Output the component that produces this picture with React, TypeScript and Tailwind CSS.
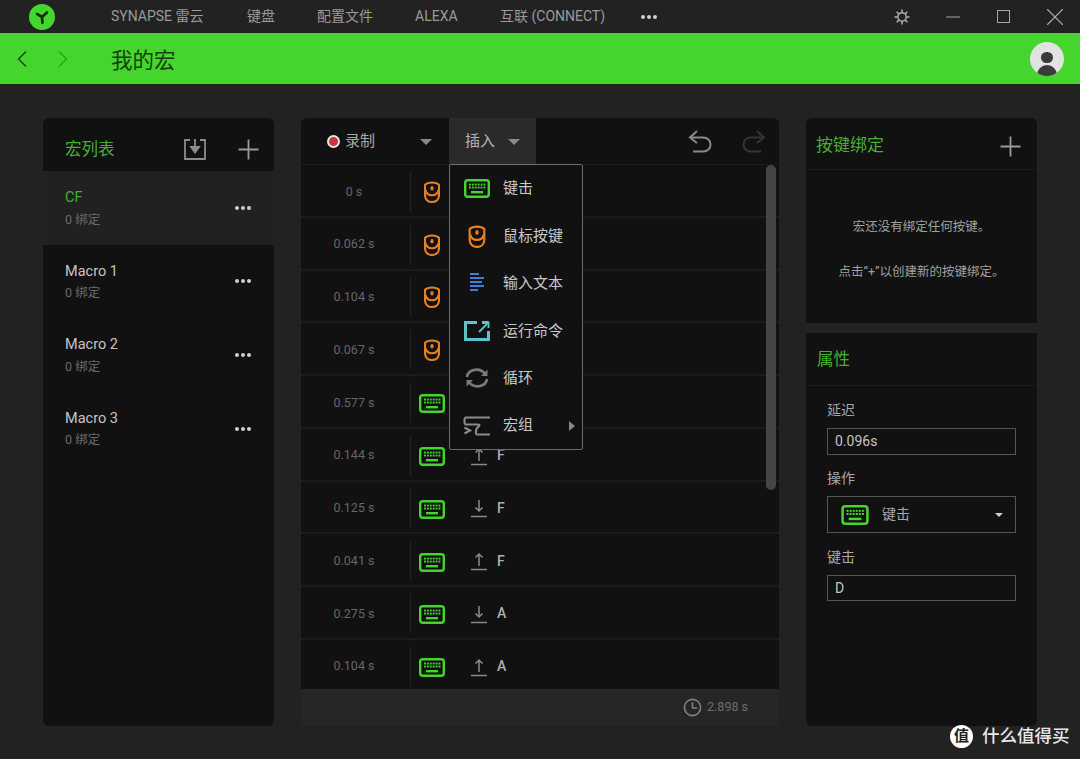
import { ChevronLeft, ChevronRight, X, Minus } from "lucide-react";

const FONT = "font-['Roboto','Noto_Sans_CJK_SC',sans-serif]";

const NAV = ["SYNAPSE 雷云", "键盘", "配置文件", "ALEXA", "互联 (CONNECT)"];
const NAV_X = ["w-[136px]", "w-[70px]", "w-[98px]", "w-[85px]", "w-[141px]"];

const MACROS = ["CF", "Macro 1", "Macro 2", "Macro 3"];

const ROWS = [
  { time: "0 s", kind: "mouse" },
  { time: "0.062 s", kind: "mouse" },
  { time: "0.104 s", kind: "mouse" },
  { time: "0.067 s", kind: "mouse" },
  { time: "0.577 s", kind: "key", dir: "down", key: "F" },
  { time: "0.144 s", kind: "key", dir: "up", key: "F" },
  { time: "0.125 s", kind: "key", dir: "down", key: "F" },
  { time: "0.041 s", kind: "key", dir: "up", key: "F" },
  { time: "0.275 s", kind: "key", dir: "down", key: "A" },
  { time: "0.104 s", kind: "key", dir: "up", key: "A" },
];

function KeyboardIcon({ className = "w-[26px] h-[19px]" }: { className?: string }) {
  return (
    <svg viewBox="0 0 26 19" className={className} fill="none">
      <rect x="1.2" y="1.2" width="23.6" height="16.6" rx="2.5" stroke="#44d62c" strokeWidth="2.4" />
      {[5, 7.9, 10.8, 13.7, 16.6, 19.5].map((x) => (
        <rect key={x} x={x} y="4.6" width="1.9" height="1.9" fill="#44d62c" />
      ))}
      {[5, 7.9, 10.8, 13.7, 16.6, 19.5].map((x) => (
        <rect key={x} x={x} y="7.6" width="1.9" height="1.9" fill="#44d62c" />
      ))}
      <rect x="7" y="12" width="12" height="2.4" fill="#44d62c" />
    </svg>
  );
}

function MouseIcon({ className = "w-[16px] h-[22px]" }: { className?: string }) {
  return (
    <svg viewBox="0 0 16 22" className={className} fill="none" stroke="#e8801f" strokeWidth="2.1">
      <path d="M1 3.8 C4 0.8 12 0.8 15 3.8 V14 C15 18.5 12 21 8 21 C4 21 1 18.5 1 14 Z" />
      <ellipse cx="8" cy="7.2" rx="1.6" ry="2.3" fill="#e8801f" stroke="none" />
      <path d="M1.5 9 C3 16 13 16 14.5 9" />
    </svg>
  );
}

function ArrowLine({ dir }: { dir: string }) {
  return (
    <svg viewBox="0 0 18 20" className="w-[18px] h-[20px]" fill="none" stroke="#8a8a8a" strokeWidth="1.5">
      {dir === "down" ? (
        <path d="M9 2 V13 M5.5 9.5 L9 13 L12.5 9.5" />
      ) : (
        <path d="M9 15 V3 M5.5 6.5 L9 3 L12.5 6.5" />
      )}
      <path d="M1 18.5 H17" />
    </svg>
  );
}

function PlusIcon() {
  return (
    <svg viewBox="0 0 21 21" className="size-[21px]" stroke="#9a9a9a" strokeWidth="1.8">
      <path d="M10.5 0.5 V20.5 M0.5 10.5 H20.5" />
    </svg>
  );
}

function UndoIcon({ flip, color }: { flip?: boolean; color: string }) {
  return (
    <svg viewBox="0 0 24 24" className={`size-[24px] ${flip ? "-scale-x-100" : ""}`} fill="none" stroke={color} strokeWidth="2">
      <path d="M9 2 L2 8.5 L9 14" />
      <path d="M2 8.5 H15 C19.5 8.5 22.5 11.5 22.5 15.5 C22.5 19.5 19.5 22.5 15 22.5 H5" />
    </svg>
  );
}

function Dots({ className = "" }: { className?: string }) {
  return (
    <div className={`flex gap-[2px] ${className}`}>
      <span className="size-[4px] rounded-full bg-[#d0d0d0]" />
      <span className="size-[4px] rounded-full bg-[#d0d0d0]" />
      <span className="size-[4px] rounded-full bg-[#d0d0d0]" />
    </div>
  );
}

function Caret({ className = "" }: { className?: string }) {
  return <span className={`block w-0 h-0 border-x-[6px] border-x-transparent border-t-[6px] border-t-[#8a8a8a] ${className}`} />;
}

function MenuItem({ icon, label, arrow }: { icon: React.ReactNode; label: string; arrow?: boolean }) {
  return (
    <div className="flex items-center h-[47.4px]">
      <div className="w-[53px] flex justify-center">{icon}</div>
      <span className="text-[15px] text-[#c8c8c8]">{label}</span>
      {arrow && <span className="ml-auto mr-[7px] w-0 h-0 border-y-[5px] border-y-transparent border-l-[6px] border-l-[#888]" />}
    </div>
  );
}

export default function App() {
  return (
    <div className={`${FONT} relative w-[1080px] h-[759px] overflow-hidden bg-[#222222] flex flex-col`}>
      {/* title bar */}
      <header className="h-[33px] flex items-center bg-[#222222]">
        <div className="w-[29px]" />
        <div className="size-[26px] rounded-full bg-[#44d62c] flex items-center justify-center">
          <svg viewBox="0 0 20 20" className="size-[18px]" fill="none" stroke="#12300c" strokeWidth="3" strokeLinecap="round">
            <path d="M10 10 L4.5 6.5 M10 10 L15.5 5 M10 10 L10.5 16.5" />
          </svg>
        </div>
        <div className="w-[56px]" />
        <nav className="flex items-center text-[14px] text-[#9a9a9a]">
          {NAV.map((item, i) => (
            <span key={item} className={NAV_X[i]}>{item}</span>
          ))}
        </nav>
        <Dots />
        <div className="ml-auto flex items-center text-[#a8a8a8]">
          <div className="w-[51px] flex justify-center">
            <svg viewBox="0 0 16 16" className="size-[16px]" fill="none" stroke="#b0b0b0" strokeWidth="1.5">
              <circle cx="8" cy="8" r="4.2" />
              <path d="M8 0.5 V3 M8 13 V15.5 M0.5 8 H3 M13 8 H15.5 M2.7 2.7 L4.6 4.6 M11.4 11.4 L13.3 13.3 M2.7 13.3 L4.6 11.4 M11.4 4.6 L13.3 2.7" />
            </svg>
          </div>
          <div className="w-[51px] flex justify-center"><Minus size={22} strokeWidth={1.2} /></div>
          <div className="w-[51px] flex justify-center"><span className="block size-[13px] border border-[#a8a8a8]" /></div>
          <div className="w-[51px] flex justify-center"><X size={30} strokeWidth={0.9} /></div>
        </div>
      </header>

      {/* green bar */}
      <div className="h-[51px] bg-[#44d62c] flex items-center text-[#1a4a12]">
        <ChevronLeft size={28} strokeWidth={1.3} className="ml-[8px]" />
        <ChevronRight size={28} strokeWidth={1.3} className="ml-[13px] text-[#2fa51e]" />
        <span className="ml-[34px] mt-[4px] text-[21.5px] leading-none text-[#17400f]">我的宏</span>
        <div className="ml-auto mr-[16px] size-[34px] rounded-full bg-[#e2e2e2] overflow-hidden flex flex-col items-center">
          <span className="mt-[10px] size-[12px] rounded-full bg-[#3a3a3a]" />
          <span className="mt-[2px] w-[20px] h-[12px] rounded-t-full bg-[#3a3a3a]" />
        </div>
      </div>

      <main className="flex-1 flex pt-[34px] pb-[33px] pl-[43px]">
        {/* macro list */}
        <section className="w-[231px] rounded-[6px] bg-[#111111] overflow-hidden">
          <div className="h-[53px] flex items-center pl-[22px] pt-[9px]">
            <span className="mt-[3px] w-[49px] text-[16.5px] whitespace-nowrap text-[#44b030]">宏列表</span>
            <svg viewBox="0 0 22 22" className="ml-[70px] size-[22px]" fill="none" stroke="#8c8c8c" strokeWidth="1.8">
              <path d="M6 2 H1 V21 H21 V2 H16" />
              <path d="M11 1 V11" />
              <path d="M7 9 L11 14.5 L15 9 Z" fill="#8c8c8c" />
            </svg>
            <div className="ml-[32px]"><PlusIcon /></div>
          </div>
          {MACROS.map((m, i) => (
            <div key={m} className={`h-[73.6px] flex items-center pl-[22px] pr-[23px] ${i === 0 ? "bg-[#212121]" : ""}`}>
              <div className="flex flex-col">
                <span className={`text-[14.5px] leading-[22px] ${i === 0 ? "text-[#44b030]" : "text-[#c4c4c4]"}`}>{m}</span>
                <span className="mt-[1.5px] text-[12.5px] leading-[18px] text-[#6a6a6a]">0 绑定</span>
              </div>
              <Dots className="ml-auto" />
            </div>
          ))}
        </section>

        {/* macro editor */}
        <section className="relative ml-[27px] w-[478px] flex flex-col rounded-t-[6px] overflow-visible">
          <div className="h-[47px] shrink-0 bg-[#111111] rounded-t-[6px] flex items-center border-b border-[#1c1c1c]">
            <span className="ml-[26px] size-[13px] rounded-full bg-[#d0323c] border-[2px] border-[#e8e8e8]" />
            <span className="ml-[5px] w-[30px] text-[15px] whitespace-nowrap text-[#a8a8a8]">录制</span>
            <Caret className="ml-[45px] mt-[2px]" />
            <div className="ml-[17px] w-[87px] h-[47px] bg-[#2a2a2a] flex items-center">
              <span className="ml-[16px] text-[15px] text-[#b4b4b4]">插入</span>
              <Caret className="ml-[13px] mt-[2px]" />
            </div>
            <div className="ml-[152px]"><UndoIcon color="#8a8a8a" /></div>
            <div className="ml-[30px]"><UndoIcon flip color="#353535" /></div>
          </div>

          <div className="h-[524px] shrink-0 bg-[#111111] overflow-hidden">
            {ROWS.map((r, i) => (
              <div key={i} className="h-[52.75px] pt-[3px] flex items-center border-b-[2px] border-[#1b1b1b]">
                <span className="w-[106px] text-center text-[12.5px] text-[#666666]">{r.time}</span>
                <span className="ml-[3px] h-[40px] w-[1px] bg-[#222222]" />
                <div className={`ml-[7px] w-[28px] flex justify-center ${r.kind === "key" ? "mt-[2px]" : ""}`}>
                  {r.kind === "mouse" ? <MouseIcon /> : <KeyboardIcon />}
                </div>
                {r.kind === "key" && (
                  <>
                    <div className="ml-[24px]"><ArrowLine dir={r.dir as string} /></div>
                    <span className="ml-[9px] text-[14px] font-medium text-[#b0b0b0]">{r.key}</span>
                  </>
                )}
              </div>
            ))}
          </div>

          <div className="flex-1 bg-[#262626] flex items-center justify-end pr-[31px] text-[#6e6e6e]">
            <svg viewBox="0 0 20 20" className="size-[19px] mr-[5px]" fill="none" stroke="#808080" strokeWidth="1.7">
              <circle cx="10" cy="10" r="8.5" />
              <path d="M10 4.5 V10.5 H15" />
            </svg>
            <span className="text-[12.5px]">2.898 s</span>
          </div>

          {/* scrollbar */}
          <span className="absolute left-[465px] top-[47px] w-[10px] h-[325px] rounded-full bg-[#454545]" />

          {/* insert menu */}
          <div className="absolute left-[148px] top-[46px] w-[134px] h-[286px] bg-[#111111] border border-[#6c6c6c] rounded-[2px]">
            <MenuItem icon={<KeyboardIcon />} label="键击" />
            <MenuItem icon={<MouseIcon className="w-[18px] h-[23px]" />} label="鼠标按键" />
            <MenuItem
              label="输入文本"
              icon={
                <svg viewBox="0 0 16 22" className="w-[16px] h-[22px]" stroke="#3f7fd8" strokeWidth="2">
                  <path d="M1 2 H10 M1 6 H15 M1 10 H13 M1 14 H15 M1 18 H9" />
                </svg>
              }
            />
            <MenuItem
              label="运行命令"
              icon={
                <svg viewBox="0 0 26 20" className="w-[26px] h-[20px]" fill="none" stroke="#5cc4c4" strokeWidth="3">
                  <path d="M13 1.5 H1.5 V18.5 H24.5 V10" />
                  <path d="M24.5 1.5 H18" />
                  <path d="M15 11 L23 3" strokeWidth="1.8" />
                  <path d="M19 1.5 H24.5 V7" strokeWidth="1.8" />
                </svg>
              }
            />
            <MenuItem
              label="循环"
              icon={
                <svg viewBox="0 0 24 22" className="w-[24px] h-[22px]" fill="none" stroke="#7a7a7a" strokeWidth="2.6">
                  <path d="M2 10 C3 2 15 0 20 7" />
                  <path d="M22 12 C21 20 9 22 4 15" />
                  <path d="M22.5 2.5 V9 H16 Z" fill="#7a7a7a" stroke="none" />
                  <path d="M1.5 19.5 V13 H8 Z" fill="#7a7a7a" stroke="none" />
                </svg>
              }
            />
            <MenuItem
              arrow
              label="宏组"
              icon={
                <svg viewBox="0 0 28 20" className="w-[28px] h-[20px]" fill="none" stroke="#8a8a8a" strokeWidth="2.2">
                  <path d="M27 1.5 H3 C1 1.5 1 8.5 3 8.5 H15 C17 8.5 17 9.5 15 11 C13 12 12 18.5 14 18.5 H27" />
                  <path d="M1.5 11.5 L7 14.5 L1.5 17.5" />
                </svg>
              }
            />
          </div>
        </section>

        {/* right column */}
        <div className="ml-[27px] w-[231px] flex flex-col gap-[10px]">
          <section className="h-[205px] bg-[#111111] rounded-t-[6px]">
            <div className="h-[52px] pt-[5px] flex items-center justify-between pl-[10px] pr-[16px] border-b border-[#1c1c1c]">
              <span className="text-[17px] text-[#44b030]">按键绑定</span>
              <PlusIcon />
            </div>
            <p className="mt-[48px] text-center text-[12.5px] text-[#a0a0a0]">宏还没有绑定任何按键。</p>
            <p className="mt-[26px] text-center text-[12.5px] text-[#a0a0a0]">点击“+”以创建新的按键绑定。</p>
          </section>
          <section className="flex-1 bg-[#111111] rounded-b-[6px]">
            <div className="h-[53px] pt-[3px] flex items-center pl-[11px] border-b border-[#1c1c1c]">
              <span className="text-[16.5px] text-[#44b030]">属性</span>
            </div>
            <div className="px-[21px] pt-[14px]">
              <p className="text-[14px] leading-[20px] text-[#a8a8a8]">延迟</p>
              <div className="mt-[8px] h-[27px] border border-[#555555] flex items-center pl-[7px] text-[14px] text-[#c4c4c4]">0.096s</div>
              <p className="mt-[13px] text-[14px] leading-[20px] text-[#a8a8a8]">操作</p>
              <div className="mt-[8px] h-[37px] border border-[#555555] flex items-center pl-[13px] pr-[12px]">
                <KeyboardIcon className="w-[28px] h-[20px]" />
                <span className="ml-[13px] text-[14px] text-[#a8a8a8]">键击</span>
                <span className="ml-auto w-0 h-0 border-x-[4px] border-x-transparent border-t-[4px] border-t-[#d0d0d0]" />
              </div>
              <p className="mt-[14px] text-[14px] leading-[20px] text-[#a8a8a8]">键击</p>
              <div className="mt-[8px] h-[26px] border border-[#555555] flex items-center pl-[7px] text-[14px] text-[#c4c4c4]">D</div>
            </div>
          </section>
        </div>
      </main>

      {/* watermark */}
      <div className="absolute left-[950px] top-[725px] flex items-center">
        <span className="size-[23px] rounded-full bg-white text-[#222] text-[15px] font-bold leading-[23px] text-center">值</span>
        <span className="ml-[9px] text-[17.5px] leading-[23px] font-medium text-[#e8e8e8]">什么值得买</span>
      </div>
    </div>
  );
}
